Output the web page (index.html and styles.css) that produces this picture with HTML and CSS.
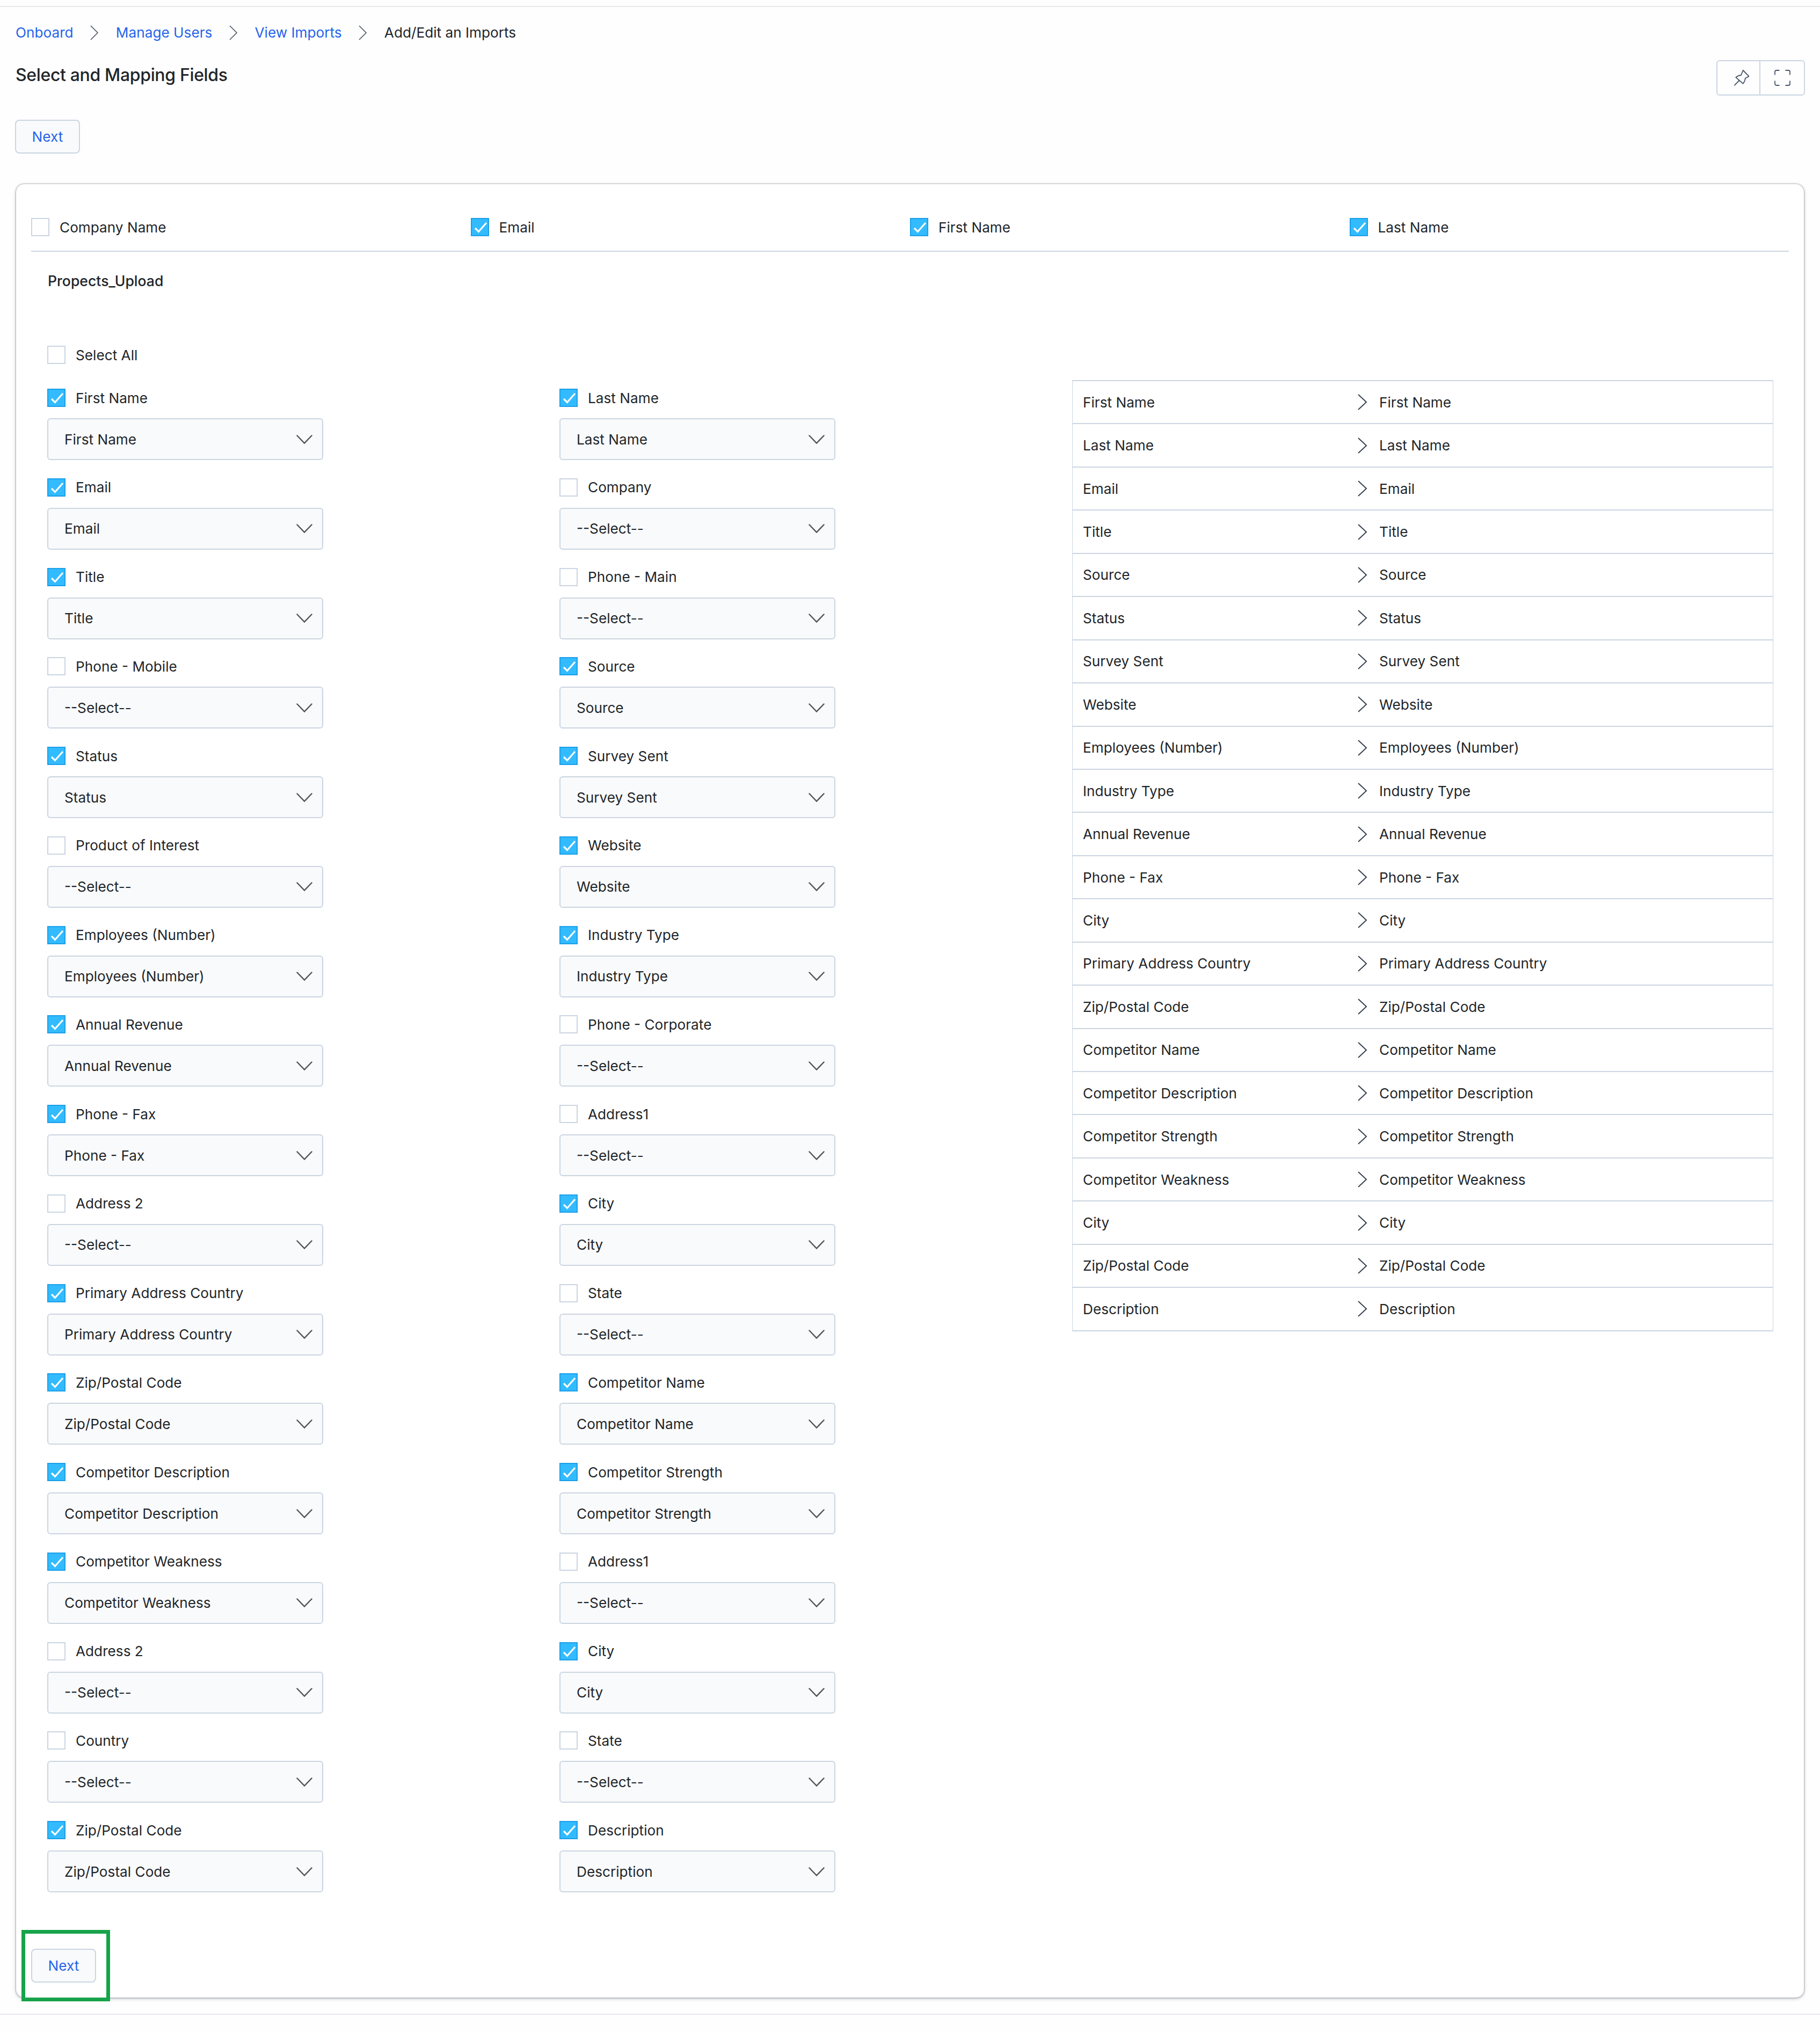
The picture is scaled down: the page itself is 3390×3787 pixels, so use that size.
FILE: index.html
```html
<!DOCTYPE html>
<html lang="en">
<head>
    <meta charset="UTF-8">
    <title>Select and Mapping Fields</title>
    <link rel="stylesheet" href="styles.css">
</head>
<body>
    <svg class="sprite" width="0" height="0">
        <symbol id="tick" viewBox="0 0 34 34"><path d="M8 19l6.500 6.500L29 9" fill="none" stroke="#fff" stroke-width="3.200"/></symbol>
        <symbol id="down" viewBox="0 0 30 17"><path d="M1.500 1.500L15 15.500 28.500 1.500" fill="none" stroke="#555" stroke-width="2.500" stroke-linecap="round"/></symbol>
        <symbol id="crumb" viewBox="0 0 16 28"><path d="M1 1l13 13L1 27" fill="none" stroke="#4b5563" stroke-width="1.600"/></symbol>
        <symbol id="arrow" viewBox="0 0 18 30"><path d="M1 1l15 14L1 29" fill="none" stroke="#374151" stroke-width="2"/></symbol>
    </svg>

    <div class="page">
        <nav class="breadcrumb">
            <a href="#">Onboard</a>
            <svg class="crumb-icon"><use href="#crumb"/></svg>
            <a href="#">Manage Users</a>
            <svg class="crumb-icon"><use href="#crumb"/></svg>
            <a href="#">View Imports</a>
            <svg class="crumb-icon"><use href="#crumb"/></svg>
            <span>Add/Edit an Imports</span>
        </nav>

        <div class="title-row">
            <h1>Select and Mapping Fields</h1>
            <div class="tool-group">
                <button class="tool-btn pin-btn">
                    <svg width="28" height="30" viewBox="0 0 28 30" fill="none" stroke="#475569" stroke-width="1.800"><path d="M16.700 1l11 11.300-6.700 3.200q-.5 5.500-4.300 10.200L3.300 14.300Q7 10.500 13 10z"/><path d="M10 19.500L.5 29"/></svg>
                </button>
                <button class="tool-btn">
                    <svg width="30" height="30" viewBox="0 0 30 30" fill="none" stroke="#475569" stroke-width="1.800"><path d="M1 9.500V4a3 3 0 0 1 3-3h5.500M20.500 1H26a3 3 0 0 1 3 3v5.500M29 20.500V26a3 3 0 0 1-3 3h-5.500M9.500 29H4a3 3 0 0 1-3-3v-5.500"/></svg>
                </button>
            </div>
        </div>

        <button class="next-btn">Next</button>

        <div class="card">
            <div class="field-bar">
                <label class="check"><span class="box"></span>Company Name</label>
                <label class="check"><span class="box on"><svg><use href="#tick"/></svg></span>Email</label>
                <label class="check"><span class="box on"><svg><use href="#tick"/></svg></span>First Name</label>
                <label class="check"><span class="box on"><svg><use href="#tick"/></svg></span>Last Name</label>
            </div>

            <div class="upload-name">Propects_Upload</div>

            <div class="mapping">
                <div class="col">
                    <label class="check select-all"><span class="box"></span>Select All</label>

                    <div class="row"><label class="check"><span class="box on"><svg><use href="#tick"/></svg></span>First Name</label><div class="select">First Name<svg><use href="#down"/></svg></div></div>
                    <div class="row"><label class="check"><span class="box on"><svg><use href="#tick"/></svg></span>Email</label><div class="select">Email<svg><use href="#down"/></svg></div></div>
                    <div class="row"><label class="check"><span class="box on"><svg><use href="#tick"/></svg></span>Title</label><div class="select">Title<svg><use href="#down"/></svg></div></div>
                    <div class="row"><label class="check"><span class="box"></span>Phone - Mobile</label><div class="select">--Select--<svg><use href="#down"/></svg></div></div>
                    <div class="row"><label class="check"><span class="box on"><svg><use href="#tick"/></svg></span>Status</label><div class="select">Status<svg><use href="#down"/></svg></div></div>
                    <div class="row"><label class="check"><span class="box"></span>Product of Interest</label><div class="select">--Select--<svg><use href="#down"/></svg></div></div>
                    <div class="row"><label class="check"><span class="box on"><svg><use href="#tick"/></svg></span>Employees (Number)</label><div class="select">Employees (Number)<svg><use href="#down"/></svg></div></div>
                    <div class="row"><label class="check"><span class="box on"><svg><use href="#tick"/></svg></span>Annual Revenue</label><div class="select">Annual Revenue<svg><use href="#down"/></svg></div></div>
                    <div class="row"><label class="check"><span class="box on"><svg><use href="#tick"/></svg></span>Phone - Fax</label><div class="select">Phone - Fax<svg><use href="#down"/></svg></div></div>
                    <div class="row"><label class="check"><span class="box"></span>Address 2</label><div class="select">--Select--<svg><use href="#down"/></svg></div></div>
                    <div class="row"><label class="check"><span class="box on"><svg><use href="#tick"/></svg></span>Primary Address Country</label><div class="select">Primary Address Country<svg><use href="#down"/></svg></div></div>
                    <div class="row"><label class="check"><span class="box on"><svg><use href="#tick"/></svg></span>Zip/Postal Code</label><div class="select">Zip/Postal Code<svg><use href="#down"/></svg></div></div>
                    <div class="row"><label class="check"><span class="box on"><svg><use href="#tick"/></svg></span>Competitor Description</label><div class="select">Competitor Description<svg><use href="#down"/></svg></div></div>
                    <div class="row"><label class="check"><span class="box on"><svg><use href="#tick"/></svg></span>Competitor Weakness</label><div class="select">Competitor Weakness<svg><use href="#down"/></svg></div></div>
                    <div class="row"><label class="check"><span class="box"></span>Address 2</label><div class="select">--Select--<svg><use href="#down"/></svg></div></div>
                    <div class="row"><label class="check"><span class="box"></span>Country</label><div class="select">--Select--<svg><use href="#down"/></svg></div></div>
                    <div class="row"><label class="check"><span class="box on"><svg><use href="#tick"/></svg></span>Zip/Postal Code</label><div class="select">Zip/Postal Code<svg><use href="#down"/></svg></div></div>
                </div>

                <div class="col col-second">
                    <div class="row"><label class="check"><span class="box on"><svg><use href="#tick"/></svg></span>Last Name</label><div class="select">Last Name<svg><use href="#down"/></svg></div></div>
                    <div class="row"><label class="check"><span class="box"></span>Company</label><div class="select">--Select--<svg><use href="#down"/></svg></div></div>
                    <div class="row"><label class="check"><span class="box"></span>Phone - Main</label><div class="select">--Select--<svg><use href="#down"/></svg></div></div>
                    <div class="row"><label class="check"><span class="box on"><svg><use href="#tick"/></svg></span>Source</label><div class="select">Source<svg><use href="#down"/></svg></div></div>
                    <div class="row"><label class="check"><span class="box on"><svg><use href="#tick"/></svg></span>Survey Sent</label><div class="select">Survey Sent<svg><use href="#down"/></svg></div></div>
                    <div class="row"><label class="check"><span class="box on"><svg><use href="#tick"/></svg></span>Website</label><div class="select">Website<svg><use href="#down"/></svg></div></div>
                    <div class="row"><label class="check"><span class="box on"><svg><use href="#tick"/></svg></span>Industry Type</label><div class="select">Industry Type<svg><use href="#down"/></svg></div></div>
                    <div class="row"><label class="check"><span class="box"></span>Phone - Corporate</label><div class="select">--Select--<svg><use href="#down"/></svg></div></div>
                    <div class="row"><label class="check"><span class="box"></span>Address1</label><div class="select">--Select--<svg><use href="#down"/></svg></div></div>
                    <div class="row"><label class="check"><span class="box on"><svg><use href="#tick"/></svg></span>City</label><div class="select">City<svg><use href="#down"/></svg></div></div>
                    <div class="row"><label class="check"><span class="box"></span>State</label><div class="select">--Select--<svg><use href="#down"/></svg></div></div>
                    <div class="row"><label class="check"><span class="box on"><svg><use href="#tick"/></svg></span>Competitor Name</label><div class="select">Competitor Name<svg><use href="#down"/></svg></div></div>
                    <div class="row"><label class="check"><span class="box on"><svg><use href="#tick"/></svg></span>Competitor Strength</label><div class="select">Competitor Strength<svg><use href="#down"/></svg></div></div>
                    <div class="row"><label class="check"><span class="box"></span>Address1</label><div class="select">--Select--<svg><use href="#down"/></svg></div></div>
                    <div class="row"><label class="check"><span class="box on"><svg><use href="#tick"/></svg></span>City</label><div class="select">City<svg><use href="#down"/></svg></div></div>
                    <div class="row"><label class="check"><span class="box"></span>State</label><div class="select">--Select--<svg><use href="#down"/></svg></div></div>
                    <div class="row"><label class="check"><span class="box on"><svg><use href="#tick"/></svg></span>Description</label><div class="select">Description<svg><use href="#down"/></svg></div></div>
                </div>

                <div class="summary">
                    <div class="summary-row"><span>First Name</span><svg><use href="#arrow"/></svg>First Name</div>
                    <div class="summary-row"><span>Last Name</span><svg><use href="#arrow"/></svg>Last Name</div>
                    <div class="summary-row"><span>Email</span><svg><use href="#arrow"/></svg>Email</div>
                    <div class="summary-row"><span>Title</span><svg><use href="#arrow"/></svg>Title</div>
                    <div class="summary-row"><span>Source</span><svg><use href="#arrow"/></svg>Source</div>
                    <div class="summary-row"><span>Status</span><svg><use href="#arrow"/></svg>Status</div>
                    <div class="summary-row"><span>Survey Sent</span><svg><use href="#arrow"/></svg>Survey Sent</div>
                    <div class="summary-row"><span>Website</span><svg><use href="#arrow"/></svg>Website</div>
                    <div class="summary-row"><span>Employees (Number)</span><svg><use href="#arrow"/></svg>Employees (Number)</div>
                    <div class="summary-row"><span>Industry Type</span><svg><use href="#arrow"/></svg>Industry Type</div>
                    <div class="summary-row"><span>Annual Revenue</span><svg><use href="#arrow"/></svg>Annual Revenue</div>
                    <div class="summary-row"><span>Phone - Fax</span><svg><use href="#arrow"/></svg>Phone - Fax</div>
                    <div class="summary-row"><span>City</span><svg><use href="#arrow"/></svg>City</div>
                    <div class="summary-row"><span>Primary Address Country</span><svg><use href="#arrow"/></svg>Primary Address Country</div>
                    <div class="summary-row"><span>Zip/Postal Code</span><svg><use href="#arrow"/></svg>Zip/Postal Code</div>
                    <div class="summary-row"><span>Competitor Name</span><svg><use href="#arrow"/></svg>Competitor Name</div>
                    <div class="summary-row"><span>Competitor Description</span><svg><use href="#arrow"/></svg>Competitor Description</div>
                    <div class="summary-row"><span>Competitor Strength</span><svg><use href="#arrow"/></svg>Competitor Strength</div>
                    <div class="summary-row"><span>Competitor Weakness</span><svg><use href="#arrow"/></svg>Competitor Weakness</div>
                    <div class="summary-row"><span>City</span><svg><use href="#arrow"/></svg>City</div>
                    <div class="summary-row"><span>Zip/Postal Code</span><svg><use href="#arrow"/></svg>Zip/Postal Code</div>
                    <div class="summary-row"><span>Description</span><svg><use href="#arrow"/></svg>Description</div>
                </div>
            </div>

            <div class="card-footer">
                <button class="next-btn">Next</button>
                <div class="highlight"></div>
            </div>
        </div>
    </div>
</body>
</html>
```

FILE: styles.css
```css
body {
    margin: 0;
    padding-top: 11px;
    background-color: #fefefe;
    color: #212529;
    font-family: Inter, "Liberation Sans", sans-serif;
    font-size: 26.2px;
}

.sprite {
    position: absolute;
}

.page {
    padding: 34px 28px 30px;
    border-top: 2px solid #e5e7eb;
    border-bottom: 2px solid #e5e7eb;
}

.breadcrumb {
    display: flex;
    align-items: center;
    height: 28px;
    line-height: 28px;
}

.breadcrumb a {
    color: #2563eb;
    text-decoration: none;
}

.breadcrumb a:first-child {
    margin-left: 1px;
}

.crumb-icon {
    width: 16px;
    height: 28px;
    margin: 0 31.6px;
}

.title-row {
    display: flex;
    justify-content: space-between;
    margin-top: 37px;
}

h1 {
    margin: 0 0 0 1px;
    font-size: 32px;
    font-weight: 500;
    letter-spacing: -0.35px;
    line-height: 56px;
}

.tool-group {
    display: flex;
    height: 66px;
    border: 2px solid #cbd5e1;
    border-radius: 6px;
    box-sizing: border-box;
}

.tool-btn {
    display: flex;
    align-items: center;
    justify-content: center;
    width: 81px;
    padding: 0;
    border: none;
    background: none;
}

.pin-btn {
    justify-content: flex-end;
    width: 80px;
    padding-right: 19px;
    border-right: 2px solid #cbd5e1;
}

.next-btn {
    display: block;
    width: 121px;
    height: 63px;
    margin-top: 45px;
    padding: 0;
    border: 2px solid #cbd5e1;
    border-radius: 8px;
    background-color: #f9fafb;
    color: #2563eb;
    font-family: inherit;
    font-size: 26.2px;
}

.card {
    margin: 57px 2px 0;
    padding: 63px 28px 28px;
    border-radius: 15px;
    background-color: #fff;
    box-shadow: 0 0 3px rgba(15, 23, 42, 0.5), 0 2px 6px rgba(15, 23, 42, 0.25);
}

.field-bar {
    display: grid;
    grid-template-columns: repeat(4, 1fr);
    padding-bottom: 27px;
    border-bottom: 2px solid #cbd5e1;
}

.check {
    display: flex;
    align-items: center;
    gap: 19px;
    height: 34px;
}

.box {
    display: block;
    width: 34px;
    height: 34px;
    border: 2px solid #cbd5e1;
    box-sizing: border-box;
    background-color: #fff;
}

.box.on {
    border-color: #1b9fe8;
    background-color: #33bbff;
}

.box svg {
    display: block;
    width: 34px;
    height: 34px;
    margin: -2px;
}

.upload-name {
    margin: 34px 0 0 31px;
    font-size: 26.6px;
    font-weight: 500;
    line-height: 40px;
}

.mapping {
    display: flex;
    align-items: flex-start;
    margin: 101px 0 0 30px;
}

.col {
    width: 954px;
}

.col-second {
    width: 955px;
    padding-top: 80px;
}

.select-all {
    margin-bottom: 46px;
}

.row {
    margin-bottom: 33.75px;
}

.select {
    display: flex;
    align-items: center;
    justify-content: space-between;
    width: 514px;
    height: 78px;
    margin-top: 21px;
    padding: 0 18px 0 30px;
    border: 2px solid #cbd5e1;
    border-radius: 6px;
    box-sizing: border-box;
    background-color: #f9fafb;
}

.select svg {
    width: 30px;
    height: 17px;
}

.summary {
    width: 1306px;
    margin-top: 64px;
    border-left: 1px solid #cbd5e1;
    border-right: 1px solid #cbd5e1;
    border-bottom: 2px solid #cbd5e1;
    box-sizing: border-box;
}

.summary-row {
    display: flex;
    align-items: center;
    height: 80.45px;
    padding-left: 19px;
    box-sizing: border-box;
    border-top: 2px solid #cbd5e1;
}

.summary-row span {
    width: 512px;
}

.summary-row svg {
    width: 18px;
    height: 30px;
    margin-right: 22px;
}

.card-footer {
    position: relative;
    width: 121px;
    margin-top: 71px;
}

.card-footer .next-btn {
    margin-top: 0;
}

/* green marker drawn over the screenshot */
.highlight {
    position: absolute;
    top: -35px;
    left: -18px;
    width: 165px;
    height: 133px;
    border: 7px solid #16a34a;
    box-sizing: border-box;
}
```
